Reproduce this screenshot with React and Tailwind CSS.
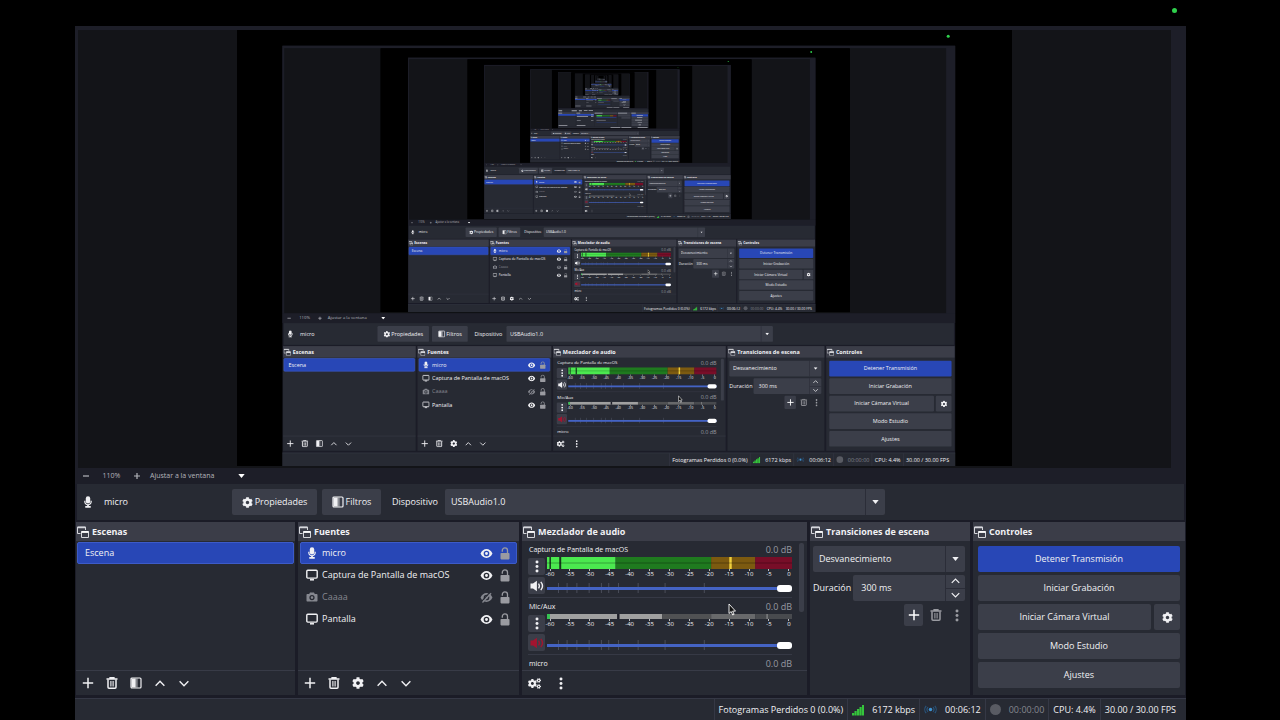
import { useLayoutEffect, useRef, useState } from "react";
import { FaCog, FaCogs } from "react-icons/fa";

const SCREEN = { width: 1280, height: 720 };
const MIRROR_DEPTH = 4;
const THUMBNAIL_DEPTH = 5;

const sources = [
  { name: "micro", icon: "mic", visible: true, selected: true },
  { name: "Captura de Pantalla de macOS", icon: "display", visible: true },
  { name: "Caaaa", icon: "camera", visible: false },
  { name: "Pantalla", icon: "display", visible: true },
];

const dbMarks = [-60, -55, -50, -45, -40, -35, -30, -25, -20, -15, -10, -5, 0];
const faderMarks = [4.5, 8, 12, 17, 22, 25, 29, 37, 48, 64];

const liveMeter = [
  { from: 0, to: 28, color: "#4be84f" },
  { from: 28, to: 67, color: "#1f7a1f" },
  { from: 67, to: 85, color: "#7c5a10" },
  { from: 85, to: 100, color: "#780e28" },
  { from: 1, to: 1.6, color: "#14361a" },
  { from: 5, to: 5.8, color: "#14361a" },
  { from: 74.4, to: 75.4, color: "#f0cf3c" },
];

const mutedMeter = [
  { from: 0, to: 47, color: "#a0a0a0" },
  { from: 47, to: 67, color: "#505153" },
  { from: 67, to: 85, color: "#68696b" },
  { from: 85, to: 100, color: "#484a4e" },
  { from: 0, to: 1.2, color: "#35c452" },
  { from: 28.6, to: 29.6, color: "#1d1e28" },
  { from: 89.5, to: 90.2, color: "#77787a" },
];

function MicIcon() {
  return (
    <svg viewBox="0 0 14 14" className="h-3 w-3 shrink-0" fill="currentColor" aria-hidden="true">
      <rect x="4.4" y="0.3" width="5.2" height="8.4" rx="2.6" />
      <path d="M2.600 5.600v1.200c0 2.200 1.500 3.700 3.400 4v1H3.800v1.900h6.400v-1.900H8v-1c1.900-.3 3.400-1.800 3.400-4V5.600H10v1.200c0 1.700-1.300 2.900-3 2.900S4 8.500 4 6.800V5.600z" />
    </svg>
  );
}

function DisplayIcon() {
  return (
    <svg viewBox="0 0 12 12" className="h-3 w-3 shrink-0" fill="none" stroke="currentColor" aria-hidden="true">
      <rect x="0.8" y="1.3" width="10.4" height="7.8" rx="1" strokeWidth="1.4" />
      <path d="M4 10.800h4" strokeWidth="1.5" />
    </svg>
  );
}

function CameraIcon() {
  return (
    <svg viewBox="0 0 12 12" className="h-3 w-3 shrink-0" fill="currentColor" aria-hidden="true">
      <path
        fillRule="evenodd"
        d="M4 1.500h4l.8 1.500h1.700c.6 0 1 .4 1 1v5.500c0 .6-.4 1-1 1h-9c-.6 0-1-.4-1-1V4c0-.6.4-1 1-1h1.700zM6 4a2.600 2.600 0 1 0 0 5.200A2.600 2.600 0 0 0 6 4zm0 1.300a1.300 1.300 0 1 1 0 2.600 1.300 1.300 0 0 1 0-2.600z"
      />
    </svg>
  );
}

function EyeIcon({ off }) {
  return (
    <svg viewBox="0 0 14 12" className="h-[11px] w-[13px]" fill="currentColor" aria-hidden="true">
      <path
        fillRule="evenodd"
        d="M.5 6C2 2.900 4.200 1.200 7 1.200S12 2.900 13.500 6C12 9.100 9.800 10.800 7 10.800S2 9.100.5 6zM7 2.900a3.100 3.100 0 1 0 0 6.200 3.100 3.100 0 0 0 0-6.200zm0 1.500a1.600 1.600 0 1 1 0 3.200 1.600 1.600 0 0 1 0-3.200z"
      />
      {off && (
        <>
          <path d="M1.500 10.500L10.800.4" stroke="#272a33" strokeWidth="1.400" />
          <path d="M2.600 11.500L12 1.300" stroke="currentColor" strokeWidth="1.400" />
        </>
      )}
    </svg>
  );
}

function LockIcon() {
  return (
    <svg viewBox="0 0 10 13" className="h-[13px] w-2.5" aria-hidden="true">
      <path d="M2.300 4.800V3.500a2.600 2.600 0 0 1 5.200 0V7" fill="none" stroke="currentColor" strokeWidth="1.3" />
      <rect x="0.5" y="6" width="9" height="6.400" rx="0.8" fill="currentColor" />
    </svg>
  );
}

function PlusIcon() {
  return (
    <svg viewBox="0 0 12 12" className="h-3 w-3" stroke="currentColor" strokeWidth="1.5" aria-hidden="true">
      <path d="M6 0.800v10.400M0.800 6h10.400" />
    </svg>
  );
}

function ZoomIcon({ plus }) {
  return (
    <svg viewBox="0 0 6 6" className="h-1.5 w-1.5" stroke="currentColor" strokeWidth="1.2" aria-hidden="true">
      <path d={plus ? "M0 3h6M3 0v6" : "M0 3h6"} />
    </svg>
  );
}

function TrashIcon() {
  return (
    <svg viewBox="0 0 12 12" className="h-3 w-3" fill="none" stroke="currentColor" aria-hidden="true">
      <path d="M0.500 2h11M4 1.600V.7h4v.9" strokeWidth="1.300" />
      <path d="M2 2.500v7.700c0 .6.400 1 1 1h6c.6 0 1-.4 1-1V2.500" strokeWidth="1.500" />
      <path d="M4.900 4v5.500M7.100 4v5.500" strokeWidth="1.100" />
    </svg>
  );
}

function FilterIcon() {
  return (
    <svg viewBox="0 0 12 12" className="h-3 w-3" aria-hidden="true">
      <rect x="1" y="1" width="10" height="10" rx="1" fill="none" stroke="currentColor" strokeWidth="1.2" />
      <rect x="1.500" y="1.500" width="4.200" height="9" fill="currentColor" />
      <rect x="5.700" y="1.500" width="2" height="9" fill="currentColor" opacity="0.45" />
    </svg>
  );
}

function ChevronIcon({ up, small }) {
  return (
    <svg
      viewBox="0 0 12 8"
      className={small ? "h-1.5 w-[9px]" : "h-[7px] w-3"}
      fill="none"
      stroke="currentColor"
      strokeWidth="1.6"
      aria-hidden="true"
    >
      <path d={up ? "M1 6.500L6 1.500l5 5" : "M1 1.500l5 5 5-5"} />
    </svg>
  );
}

function CaretIcon() {
  return (
    <svg viewBox="0 0 8 5" className="h-1 w-[7px]" fill="currentColor" aria-hidden="true">
      <path d="M0 0h8L4 5z" />
    </svg>
  );
}

function KebabIcon() {
  return (
    <svg viewBox="0 0 4 14" className="h-[13px] w-1" fill="currentColor" aria-hidden="true">
      <circle cx="2" cy="2.200" r="1.600" />
      <circle cx="2" cy="7" r="1.600" />
      <circle cx="2" cy="11.800" r="1.600" />
    </svg>
  );
}

function SpeakerIcon() {
  return (
    <svg viewBox="0 0 14 12" className="h-3 w-3.5" aria-hidden="true">
      <path d="M0.500 3.600h2.500L6.900.8v10.400L3 8.400H.5z" fill="currentColor" />
      <path d="M8.500 3.600c1 1.400 1 3.400 0 4.800M10.800 1.900c2 2.400 2 5.800 0 8.200" fill="none" stroke="currentColor" strokeWidth="1.400" />
    </svg>
  );
}

function DockIcon() {
  return (
    <svg viewBox="0 0 12 12" className="h-3 w-3 shrink-0" fill="none" stroke="#d6d7dc" aria-hidden="true">
      <path d="M3.500 7.500h-3v-6.500h8v3" />
      <path d="M0.500 1.500h8" strokeWidth="1.500" />
      <path d="M4.500 5.500h7v6h-7z" />
      <path d="M4.500 6h7" strokeWidth="1.800" stroke="#ffffff" />
    </svg>
  );
}

const sourceIcons = { mic: MicIcon, display: DisplayIcon, camera: CameraIcon };

function IconButton({ label, className = "", children }) {
  return (
    <button type="button" aria-label={label} className={`flex items-center justify-center ${className}`}>
      {children}
    </button>
  );
}

function Dock({ title, children }) {
  return (
    <section className="flex min-w-0 flex-col bg-[#272a33]">
      <h2 className="flex h-[19px] shrink-0 items-center gap-[3px] bg-[#3b3d48] px-px font-bold">
        <DockIcon />
        {title}
      </h2>
      {children}
    </section>
  );
}

function DockToolbar({ children }) {
  return (
    <div className="flex h-[25px] shrink-0 items-center gap-3 border-t border-[#383b47] px-1.5">
      {children}
    </div>
  );
}

function Meter({ segments, muted }) {
  return (
    <svg viewBox="0 0 100 12" preserveAspectRatio="none" className={`block w-full ${muted ? "h-[5px]" : "h-3"}`} aria-hidden="true">
      {segments.map((s) => (
        <rect key={`${s.from}-${s.to}`} x={s.from} y="0" width={s.to - s.from} height="12" fill={s.color} />
      ))}
      {!muted && <rect x="0" y="5.500" width="100" height="1" fill="#000000" opacity="0.3" />}
    </svg>
  );
}

function ChannelName({ name }) {
  return (
    <div className="flex h-4 items-center justify-between pt-px pl-px">
      <span className="text-[7px]">{name}</span>
      <span className="text-[#989aa2]">0.0 dB</span>
    </div>
  );
}

function Channel({ name, segments, muted }) {
  return (
    <div className="h-[57px] shrink-0 border-b border-[#363945]">
      <ChannelName name={name} />
      <div className="flex h-10 gap-0.5">
        <div className="flex w-[17px] shrink-0 flex-col gap-0.5 pt-px">
          <IconButton label="Opciones" className="h-[17px] rounded-xs bg-[#3b3e49]">
            <KebabIcon />
          </IconButton>
          <IconButton
            label={muted ? "Activar sonido" : "Silenciar"}
            className={`h-[17px] rounded-xs bg-[#3b3e49] ${muted ? "text-[#a3142f]" : ""}`}
          >
            <SpeakerIcon />
          </IconButton>
        </div>
        <div className="flex min-w-0 flex-1 flex-col pb-1">
          <Meter segments={segments} muted={muted} />
          <div className="flex justify-between text-[6px] leading-[7px]">
            {dbMarks.map((db) => (
              <span key={db} className="flex w-1.5 flex-col items-center">
                <span className="h-0.5 w-px bg-[#b9bac0]" />
                {db}
              </span>
            ))}
          </div>
          <div className="relative mt-auto h-2.5">
            <svg viewBox="0 0 100 10" preserveAspectRatio="none" className="absolute inset-0 h-full w-full" aria-hidden="true">
              {faderMarks.map((x) => (
                <rect key={x} x={x} y="0" width="0.4" height="10" fill="#4b4e5b" />
              ))}
            </svg>
            <input
              type="range"
              min="0"
              max="100"
              defaultValue="100"
              aria-label={`Volumen de ${name}`}
              className="relative block h-2.5 w-full appearance-none bg-transparent [&::-webkit-slider-runnable-track]:h-[3px] [&::-webkit-slider-runnable-track]:bg-[#4463c4] [&::-webkit-slider-thumb]:-mt-0.5 [&::-webkit-slider-thumb]:h-[7px] [&::-webkit-slider-thumb]:w-[15px] [&::-webkit-slider-thumb]:appearance-none [&::-webkit-slider-thumb]:rounded-[3px] [&::-webkit-slider-thumb]:bg-white"
            />
          </div>
        </div>
      </div>
    </div>
  );
}

function Dropdown({ label, value, className }) {
  return (
    <div className={`relative h-[26px] ${className}`}>
      <select aria-label={label} className="h-full w-full appearance-none rounded-xs bg-[#3b3e49] px-1.5">
        <option>{value}</option>
      </select>
      <span className="pointer-events-none absolute inset-y-0 right-0 flex w-5 items-center justify-center border-l border-[#2b2d38]">
        <CaretIcon />
      </span>
    </div>
  );
}

// Drawn stand-in for the window once the mirrored copy is too small to read.
function ThumbnailScreen({ depth }) {
  return (
    <>
      <rect width="1280" height="720" fill="#000000" />
      <rect x="75" y="26" width="1111" height="694" fill="#1d1e28" />
      <rect x="78" y="30" width="1093" height="438" fill="#131418" />
      <rect x="237" y="30" width="776" height="436" fill="#000000" />
      <rect x="77" y="484" width="1107" height="36" fill="#272a33" />
      <path d="M82 496h44v11H82zM242 496h64v11h-64zM331 496h38v11h-38zM392 497h45v9h-45zM451 497h54v9h-54z" fill="#a5a7b0" />
      <path d="M76 522h219v173H76zM298 522h221v173H298zM522 522h284v173H522zM810 522h159v173H810zM973 522h212v173H973zM76 699h1109v21H76z" fill="#272a33" />
      <path d="M76 522h219v19H76zM298 522h221v19H298zM522 522h284v19H522zM810 522h159v19H810zM973 522h212v19H973zM813 546h152v26H813zM853 575h112v26H853zM978 575h202v26H978zM978 604h202v26H978zM978 633h202v26H978zM978 662h202v26H978z" fill="#3b3e49" />
      <path d="M77 542h216v22H77zM300 542h217v22H300zM978 546h202v26H978zM547 586h245v4H547zM547 643h245v4H547z" fill="#2847b6" />
      <path d="M78 527h48v9H78zM300 527h48v9H300zM524 527h98v9H524zM812 527h112v9H812zM975 527h55v9h-55zM306 571h138v8H306zM306 615h48v8H306zM480 549h30v8h-30zM480 571h30v8h-30zM480 615h30v8h-30zM1040 554h78v9h-78zM1046 583h65v8h-65zM1022 613h84v8h-84zM1052 642h54v8h-54zM1065 671h28v8h-28zM720 705h120v8H720zM853 705h122v8H853zM1053 705h122v8h-122zM82 678h108v8H82zM304 678h108v8H304z" fill="#a5a7b0" />
      {liveMeter.slice(0, 4).map((s) => (
        <rect key={s.from} x={547 + s.from * 2.45} y="557" width={(s.to - s.from) * 2.45} height="14" fill={s.color} />
      ))}
      <rect x="547" y="615" width="115" height="6" fill="#a0a0a0" />
      {depth < THUMBNAIL_DEPTH && (
        <g transform="translate(237 30) scale(0.6056)">
          <ThumbnailScreen depth={depth + 1} />
        </g>
      )}
    </>
  );
}

function Preview({ depth }) {
  const frame = useRef(null);
  const [scale, setScale] = useState(0.6);

  useLayoutEffect(() => {
    const fit = () => setScale(frame.current.clientHeight / SCREEN.height);
    fit();
    window.addEventListener("resize", fit);
    return () => window.removeEventListener("resize", fit);
  }, []);

  return (
    <div className="min-h-0 flex-1 bg-[#1d1e28] pt-1 pr-[15px] pl-[3px]">
      <div className="flex h-full justify-center overflow-hidden bg-[#131418] pb-0.5">
        <div ref={frame} className="aspect-video h-full overflow-hidden bg-black">
          {depth < MIRROR_DEPTH ? (
            <div inert aria-hidden="true" className="h-[720px] w-[1280px] origin-top-left" style={{ transform: `scale(${scale})` }}>
              <Desktop depth={depth + 1} />
            </div>
          ) : (
            <svg viewBox="0 0 1280 720" className="block h-full w-full" aria-hidden="true">
              <ThumbnailScreen depth={0} />
            </svg>
          )}
        </div>
      </div>
    </div>
  );
}

function ZoomBar() {
  return (
    <div className="flex h-4 shrink-0 items-center bg-[#1d1e28] pl-2 text-[7px] text-[#b4b5bb]">
      <IconButton label="Alejar"><ZoomIcon /></IconButton>
      <span className="w-[45px] text-center">110%</span>
      <IconButton label="Acercar"><ZoomIcon plus /></IconButton>
      <button type="button" className="ml-2.5 flex w-[95px] items-center justify-between">
        Ajustar a la ventana
        <span className="text-white"><CaretIcon /></span>
      </button>
    </div>
  );
}

function SourceBar() {
  return (
    <div className="mx-0.5 flex h-9 shrink-0 items-center bg-[#272a33] pl-[5px]">
      <div className="flex w-[150px] shrink-0 items-center gap-2.5">
        <MicIcon />
        micro
      </div>
      <button type="button" className="flex h-[26px] w-[85px] items-center justify-center gap-0.5 rounded-xs bg-[#3b3e49]">
        <FaCog className="h-[11px] w-[11px]" />
        Propiedades
      </button>
      <button type="button" className="ml-[5px] flex h-[26px] w-[59px] items-center justify-center gap-0.5 rounded-xs bg-[#3b3e49]">
        <FilterIcon />
        Filtros
      </button>
      <span className="mr-[7px] ml-[11px]">Dispositivo</span>
      <Dropdown label="Dispositivo" value="USBAudio1.0" className="max-w-[440px] flex-1" />
    </div>
  );
}

function Scenes() {
  return (
    <Dock title="Escenas">
      <ul className="flex-1 p-px">
        <li className="flex h-[22px] items-center rounded-xs border border-[#3d5bc8] bg-[#2847b6] px-[7px]">Escena</li>
      </ul>
      <DockToolbar>
        <IconButton label="Agregar escena"><PlusIcon /></IconButton>
        <IconButton label="Eliminar escena"><TrashIcon /></IconButton>
        <IconButton label="Filtros de escena"><FilterIcon /></IconButton>
        <IconButton label="Subir escena"><ChevronIcon up /></IconButton>
        <IconButton label="Bajar escena"><ChevronIcon /></IconButton>
      </DockToolbar>
    </Dock>
  );
}

function Sources() {
  return (
    <Dock title="Fuentes">
      <ul className="flex-1 px-0.5 py-px">
        {sources.map((source) => {
          const Icon = sourceIcons[source.icon];
          return (
            <li
              key={source.name}
              className={`flex h-[22px] items-center gap-1 rounded-xs border pr-1.5 pl-[5px] ${
                source.selected ? "border-[#3d5bc8] bg-[#2847b6]" : "border-transparent"
              } ${source.visible ? "" : "text-[#85878f]"}`}
            >
              <Icon />
              <span className="min-w-0 flex-1 truncate">{source.name}</span>
              <IconButton label={source.visible ? "Ocultar" : "Mostrar"}><EyeIcon off={!source.visible} /></IconButton>
              <IconButton label="Bloquear" className="ml-[3px] text-[#9a9ba1]"><LockIcon /></IconButton>
            </li>
          );
        })}
      </ul>
      <DockToolbar>
        <IconButton label="Agregar fuente"><PlusIcon /></IconButton>
        <IconButton label="Eliminar fuente"><TrashIcon /></IconButton>
        <IconButton label="Propiedades de la fuente"><FaCog className="h-3 w-3" /></IconButton>
        <IconButton label="Subir fuente"><ChevronIcon up /></IconButton>
        <IconButton label="Bajar fuente"><ChevronIcon /></IconButton>
      </DockToolbar>
    </Dock>
  );
}

function Mixer() {
  return (
    <Dock title="Mezclador de audio">
      <div className="relative flex min-h-0 flex-1 basis-0 overflow-hidden pr-[3px] pl-1.5">
        <div className="min-w-0 flex-1">
          <Channel name="Captura de Pantalla de macOS" segments={liveMeter} />
          <Channel name="Mic/Aux" segments={mutedMeter} muted />
          <ChannelName name="micro" />
        </div>
        <div className="mt-0.5 ml-[7px] h-[69px] w-[5px] rounded-xs bg-[#3b3e49]" />
        <svg viewBox="0 0 8 13" className="absolute top-[62px] left-[206px] h-[13px] w-2" aria-hidden="true">
          <path d="M1 1v9.500l2.200-2 1.500 3.500 1.400-.7-1.500-3.200h2.900z" fill="#111111" stroke="#ffffff" strokeWidth="0.9" />
        </svg>
      </div>
      <DockToolbar>
        <IconButton label="Propiedades avanzadas de audio"><FaCogs className="h-[13px] w-[13px]" /></IconButton>
        <IconButton label="Menú del mezclador" className="w-4"><KebabIcon /></IconButton>
      </DockToolbar>
    </Dock>
  );
}

function Transitions() {
  return (
    <Dock title="Transiciones de escena">
      <div className="flex flex-col gap-[3px] pt-[5px] pr-[5px] pl-[3px]">
        <Dropdown label="Transición" value="Desvanecimiento" className="w-full" />
        <label className="flex items-center gap-0.5">
          <span className="shrink-0">Duración</span>
          <span className="flex h-[26px] min-w-0 flex-1 rounded-xs bg-[#3b3e49]">
            <input type="text" defaultValue="300 ms" className="min-w-0 flex-1 bg-transparent px-2 outline-none" />
            <span className="flex w-5 flex-col border-l border-[#2b2d38]">
              <IconButton label="Aumentar" className="flex-1 border-b border-[#2b2d38]"><ChevronIcon up small /></IconButton>
              <IconButton label="Reducir" className="flex-1"><ChevronIcon small /></IconButton>
            </span>
          </span>
        </label>
        <div className="flex h-[22px] items-center justify-end gap-[7px] text-[#9a9ba1]">
          <IconButton label="Agregar transición" className="h-[22px] w-[19px] rounded-xs bg-[#3b3e49] text-white"><PlusIcon /></IconButton>
          <IconButton label="Eliminar transición"><TrashIcon /></IconButton>
          <IconButton label="Menú de transición" className="w-4"><KebabIcon /></IconButton>
        </div>
      </div>
    </Dock>
  );
}

function Controls() {
  const button = "flex h-[26px] items-center justify-center rounded-xs bg-[#3b3e49]";
  return (
    <Dock title="Controles">
      <div className="flex flex-col gap-[3px] px-[5px] pt-[5px]">
        <button type="button" className="flex h-[26px] items-center justify-center rounded-xs bg-[#2847b6]">Detener Transmisión</button>
        <button type="button" className={button}>Iniciar Grabación</button>
        <div className="flex gap-[3px]">
          <button type="button" className={`${button} flex-1`}>Iniciar Cámara Virtual</button>
          <IconButton label="Configurar cámara virtual" className="h-[26px] w-[26px] rounded-xs bg-[#3b3e49]">
            <FaCog className="h-[11px] w-[11px]" />
          </IconButton>
        </div>
        <button type="button" className={button}>Modo Estudio</button>
        <button type="button" className={button}>Ajustes</button>
      </div>
    </Dock>
  );
}

function StatusBar() {
  const item = "flex items-center gap-2 border-l border-[#353845] px-1";
  return (
    <footer className="mt-[3px] flex h-[22px] shrink-0 justify-end border-t border-[#353845] bg-[#272a33] pr-0.5 whitespace-nowrap">
      <span className={item}>Fotogramas Perdidos 0 (0.0%)</span>
      <span className={item}>
        <svg viewBox="0 0 12 12" className="h-3 w-3" fill="#35c43c" aria-hidden="true">
          <path d="M0 9h2.200v2.500H0zM2.500 7h2.200v4.500H2.500zM5 5h2.200v6.500H5zM7.500 3h2.200v8.500H7.500zM10 1h2v10.500h-2z" />
        </svg>
        6172 kbps
      </span>
      <span className={item}>
        <svg viewBox="0 0 14 12" className="h-[11px] w-[13px]" fill="none" stroke="#28557d" strokeWidth="1.2" aria-hidden="true">
          <circle cx="7" cy="6" r="1.900" fill="#3f93d2" stroke="none" />
          <path d="M4.300 3.500a3.700 3.700 0 0 0 0 5M9.700 3.500a3.700 3.700 0 0 1 0 5M2.300 2a6 6 0 0 0 0 8M11.700 2a6 6 0 0 1 0 8" />
        </svg>
        00:06:12
      </span>
      <span className={`${item} text-[#85878f]`}>
        <span className="h-[11px] w-[11px] rounded-full bg-[#595b63]" />
        00:00:00
      </span>
      <span className={item}>CPU: 4.4%</span>
      <span className={`${item} pr-2`}>30.00 / 30.00 FPS</span>
    </footer>
  );
}

function Desktop({ depth }) {
  return (
    <div className="flex h-full flex-col bg-black pr-[94px] pl-[75px] font-['Open_Sans','Noto_Sans',sans-serif] text-[9px] leading-3 text-[#f1f1f4]">
      <div className="flex h-[26px] shrink-0 items-start justify-end pt-2 pr-[9px]">
        <span className="h-[5px] w-[5px] rounded-full bg-[#2fd04c]" />
      </div>
      <div className="flex min-h-0 flex-1 flex-col bg-[#1b1c27]">
        <Preview depth={depth} />
        <ZoomBar />
        <SourceBar />
        <div className="mt-0.5 grid h-[173px] shrink-0 grid-cols-[219fr_221fr_285fr_160fr_212fr] gap-[3px] px-px">
          <Scenes />
          <Sources />
          <Mixer />
          <Transitions />
          <Controls />
        </div>
        <StatusBar />
      </div>
    </div>
  );
}

export default function App() {
  return (
    <main className="h-screen min-w-[900px] overflow-hidden bg-black">
      <Desktop depth={0} />
    </main>
  );
}
